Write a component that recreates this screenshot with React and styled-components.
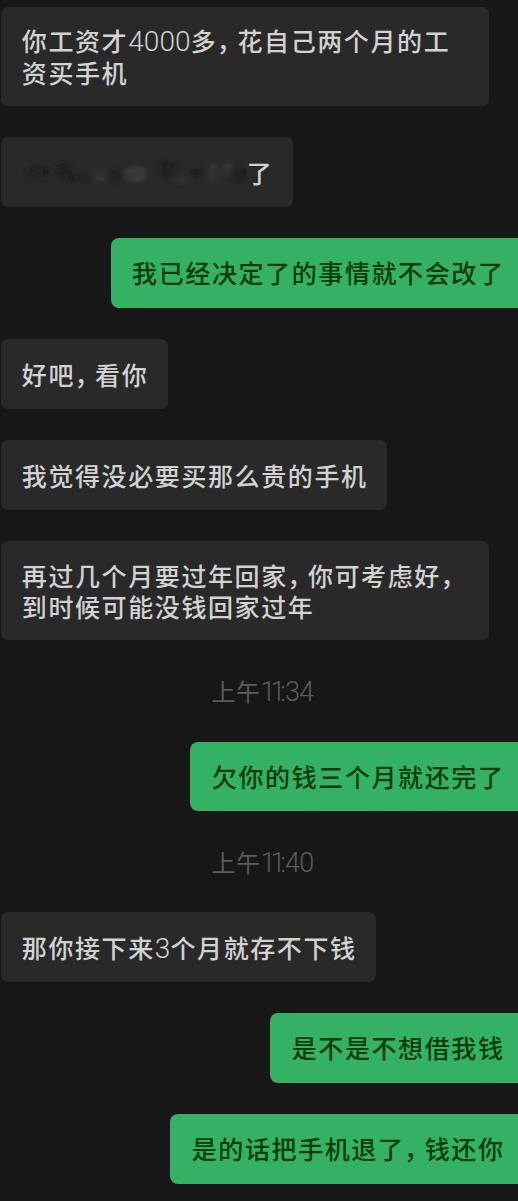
/* base */
import React from 'react';
import styled, { createGlobalStyle } from 'styled-components';

const pageDark = '#171717';
const bubbleGrey = '#292929';
const bubbleGreen = '#35b163';
const textLight = '#d2d2d2';
const textGreen = '#053d0b';
const timeGrey = '#5c5c5c';

const GlobalStyle = createGlobalStyle`
  body {
    margin: 0;
    background-color: ${pageDark};
    overflow: hidden;
  }
`;

const Chat = styled.div`
  box-sizing: border-box;
  display: flex;
  flex-direction: column;
  gap: 31.6px;
  width: 518px;
  height: 1201px;
  padding-top: 6.6px;
  background-color: ${pageDark};
  font-family: 'Noto Sans CJK SC', sans-serif;
`;

const Row = styled.div`
  display: flex;
  flex: none;
  justify-content: ${props => (props.$mine ? 'flex-end' : 'flex-start')};
  padding-left: 1px;
`;

const Bubble = styled.div`
  box-sizing: border-box;
  display: flex;
  align-items: center;
  width: ${props => (props.$wide ? '487.5px' : 'auto')};
  min-height: 69.4px;
  padding: ${props => (props.$mine ? '18.2px 13.5px 17.8px 21.5px' : '18.4px 19.5px 17.6px 20.8px')};
  border-radius: ${props => (props.$mine ? '8px 0 0 8px' : '7px')};
  background-color: ${props => (props.$mine ? bubbleGreen : bubbleGrey)};
  color: ${props => (props.$mine ? textGreen : textLight)};
`;

const Message = styled.div`
  font-size: 25px;
  font-weight: 500;
  letter-spacing: 1.6px;
  line-height: 31.6px;
  white-space: pre;
`;

const Digits = styled.span`
  font-family: Roboto, sans-serif;
  font-size: 28px;
  font-weight: 300;
  letter-spacing: 0.1px;
  line-height: 1;
`;

const Comma = styled.span`
  margin-left: -0.5px;
  margin-right: 6.5px;
  font-feature-settings: 'halt';
`;

const Time = styled.div`
  display: flex;
  flex: none;
  align-items: baseline;
  justify-content: center;
  height: 38px;
  margin-left: 7px;
  color: ${timeGrey};
  font-size: 24px;
  letter-spacing: 0.5px;
  line-height: 38px;
`;

const TimeDigit = styled.span`
  font-family: Roboto, sans-serif;
  font-size: 27px;
  font-weight: 300;
  letter-spacing: ${props => (props.$narrow ? '-5.2px' : '-0.8px')};
`;

const Smudge = styled.svg`
  flex: none;
  width: 225px;
  height: 32px;
`;

const messages = [
  { text: '你工资才4000多，花自己两个月的工\n资买手机', wide: true },
  { text: '了', smudged: true },
  { text: '我已经决定了的事情就不会改了', mine: true },
  { text: '好吧，看你' },
  { text: '我觉得没必要买那么贵的手机' },
  { text: '再过几个月要过年回家，你可考虑好，\n到时候可能没钱回家过年', wide: true },
  { time: '11:34' },
  { text: '欠你的钱三个月就还完了', mine: true },
  { time: '11:40' },
  { text: '那你接下来3个月就存不下钱' },
  { text: '是不是不想借我钱', mine: true },
  { text: '是的话把手机退了，钱还你', mine: true },
];

// x, y, rx, ry, fill
const smears = [
  [16, 18, 12, 5, '#222'],
  [42, 14, 9, 7, '#202020'],
  [60, 22, 14, 5, '#232323'],
  [78, 20, 9, 6, '#303030'],
  [94, 20, 8, 6, '#222'],
  [113, 18, 12, 8, '#383838'],
  [146, 14, 10, 8, '#222'],
  [160, 22, 10, 5, '#2d2d2d'],
  [176, 17, 10, 6, '#222'],
  [191, 17, 7, 8, '#303030'],
  [206, 13, 5, 7, '#343434'],
  [218, 19, 9, 8, '#222'],
];

// digits and commas are set apart from the han glyphs
const renderText = text => text.split(/(\d+|，)/).map((part, index) => {
  if (/^\d+$/.test(part)) return <Digits key={`part-${index}`}>{part}</Digits>;
  if (part === '，') return <Comma key={`part-${index}`}>{part}</Comma>;
  return part;
});

const SmudgedText = () => (
  <Smudge viewBox="0 0 225 32">
    <defs>
      <filter id="smear" x="-20%" y="-30%" width="140%" height="160%">
        <feGaussianBlur stdDeviation="2.6" />
      </filter>
      <filter id="scratch" x="-20%" y="-30%" width="140%" height="160%">
        <feGaussianBlur stdDeviation="0.9" />
      </filter>
    </defs>
    <g filter="url(#smear)">
      {smears.map(([x, y, rx, ry, fill], index) => (
        <ellipse key={`smear-${index}`} cx={x} cy={y} rx={rx} ry={ry} fill={fill} />
      ))}
    </g>
    <g filter="url(#scratch)" fill="none" strokeWidth="1.8">
      <path
        stroke="#141414"
        opacity="0.65"
        d="M8 14l7-3 4 1M24 12v7M36 11l9-2M40 15v6M45 14l5 9M92 16l5 3M141 11l4-6M148 9l6 1M143 17l2 5M171 16l5-1M223 14l-4 8"
      />
      <path
        stroke="#444"
        opacity="0.7"
        d="M112 15q5-5 9 0M113 22q6 3 10-2M190 12l4-3M202 11l5-2M75 22l7 2"
      />
    </g>
  </Smudge>
);

const App = () => {
  return (
    <>
      <GlobalStyle />
      <Chat>
        {messages.map((item, index) => (item.time ? (
          <Time key={`item-${index}`}>
            上午
            {item.time.split('').map((char, charInd) => (
              <TimeDigit key={`char-${charInd}`} $narrow={char === '1'}>{char}</TimeDigit>
            ))}
          </Time>
        ) : (
          <Row key={`item-${index}`} $mine={item.mine}>
            <Bubble $mine={item.mine} $wide={item.wide}>
              {item.smudged && <SmudgedText />}
              <Message>{renderText(item.text)}</Message>
            </Bubble>
          </Row>
        )))}
      </Chat>
    </>
  );
};

export default App;
